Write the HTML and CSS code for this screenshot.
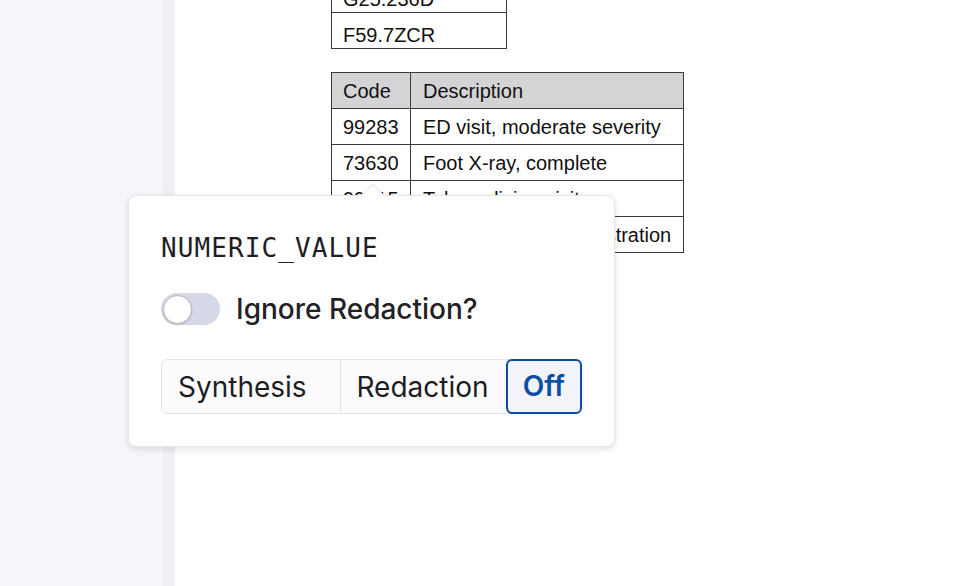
FILE: index.html
```html
<!DOCTYPE html>
<html>
<head>
<meta charset="utf-8">
<link rel="stylesheet" href="styles.css">
</head>
<body>
<div class="app">
  <aside class="sidebar"></aside>
  <div class="strip"></div>
  <main class="main">
    <div class="doc">
      <table class="grid codes">
        <tr><td>G25.236D</td></tr>
        <tr><td>F59.7ZCR</td></tr>
      </table>
      <table class="grid procs">
        <tr><th>Code</th><th>Description</th></tr>
        <tr><td>99283</td><td>ED visit, moderate severity</td></tr>
        <tr><td>73630</td><td>Foot X-ray, complete</td></tr>
        <tr><td>99215</td><td>Telemedicine visit</td></tr>
        <tr><td>96374</td><td class="tight">IV medication administration</td></tr>
      </table>
    </div>
  </main>
</div>
<div class="popover">
  <div class="pop-title">NUMERIC_VALUE</div>
  <label class="toggle-row">
    <span class="toggle"><span class="knob"></span></span>
    <span class="toggle-label">Ignore Redaction?</span>
  </label>
  <div class="segmented">
    <button class="seg seg-syn">Synthesis</button>
    <button class="seg seg-red">Redaction</button>
    <button class="seg seg-off active">Off</button>
  </div>
</div>
</body>
</html>
```
FILE: styles.css
```css
* { box-sizing: border-box; }
html, body { margin: 0; padding: 0; height: 100%; background: #fff; overflow: hidden; }
body { font-family: "Inter", "Liberation Sans", sans-serif; }
.app { display: flex; height: 586px; }
.sidebar { width: 163px; background: #f5f5fa; flex: none; }
.strip { width: 12px; background: #efeff4; flex: none; }
.main { flex: 1; background: #fff; }
.doc { padding-left: 156px; margin-top: -24px; display: flex; flex-direction: column; gap: 23px; align-items: flex-start; }
.grid { border-collapse: collapse; font-family: "Liberation Sans", Arial, sans-serif; font-size: 20px; color: #111; }
.grid td, .grid th { border: 1px solid #3a3a3a; padding: 2px 11px 0 11px; height: 36px; text-align: left; font-weight: normal; white-space: nowrap; }
.grid th { background: #d4d3d6; }
.codes { width: 176px; }
.codes td { padding-top: 9px; }
.procs td:first-child, .procs th:first-child { width: 79px; }
.procs td:last-child, .procs th:last-child { padding-left: 12px; padding-right: 8px; }
.procs .tight { word-spacing: -1.5px; }
.procs { width: 353px; }

.popover { position: absolute; left: 128px; top: 195px; width: 487px; height: 252px; background: #fff; border: 1px solid #e6e6ec; border-radius: 8px; box-shadow: 0 2px 6px rgba(0,0,0,0.12); padding: 35px 32px 0 32px; }
.popover::before { content: ""; position: absolute; left: 235px; top: -9px; width: 16px; height: 16px; background: #fff; border-left: 1px solid #e6e6ec; border-top: 1px solid #e6e6ec; transform: rotate(45deg); }
.pop-title { font-family: "DejaVu Sans Mono", monospace; font-size: 26px; color: #1e1e22; line-height: 34px; letter-spacing: 1.1px; }
.toggle-row { display: flex; align-items: center; gap: 16px; margin-top: 27px; }
.toggle { width: 59px; height: 32px; border-radius: 16px; background: #d5d8e6; display: flex; align-items: center; padding: 0 2px; }
.knob { width: 29px; height: 29px; border-radius: 50%; background: #fff; border: 1.5px solid #b6b6bc; box-shadow: 0 1px 2px rgba(0,0,0,0.15); }
.toggle-label { font-size: 28px; font-weight: 500; color: #222226; line-height: 34px; }
.segmented { display: flex; margin-top: 33px; width: 420px; height: 55px; border: 1.5px solid #e1e1e8; border-radius: 7px; background: #fcfcfe; }
.seg { font-family: "Inter", sans-serif; font-size: 28px; color: #1e1e22; background: transparent; border: none; padding: 0; height: 100%; cursor: pointer; }
.seg-syn { width: 179px; border-right: 1.5px solid #e1e1e8; padding-left: 16px; text-align: left; }
.seg-red { width: 165px; text-align: center; padding-right: 2px; }
.seg-off { flex: 1; margin: -1.5px -1.5px -1.5px 0; height: 55px; }
.seg.active { border: 2px solid #0a4ea3; border-radius: 6px; background: #f3f4fa; color: #0a4ea3; font-weight: 600; }
```
